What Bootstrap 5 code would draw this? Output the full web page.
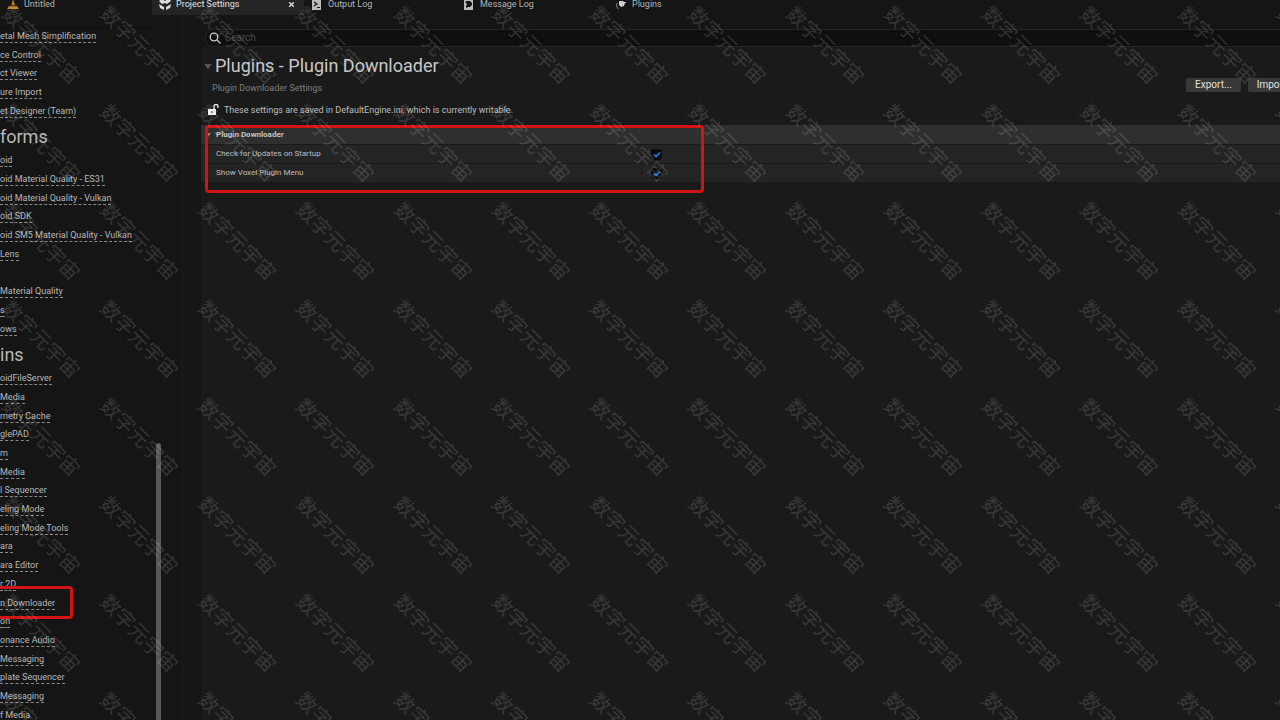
<!DOCTYPE html>
<html lang="en" data-bs-theme="dark">
<head>
<meta charset="utf-8">
<meta name="viewport" content="width=device-width, initial-scale=1">
<title>Project Settings</title>
<link href="https://cdn.jsdelivr.net/npm/bootstrap@5.3.0/dist/css/bootstrap.min.css" rel="stylesheet">
<style>
  body { font-family: Roboto, "Liberation Sans", sans-serif; font-size: 9px; line-height: 14px; color: #bdbdbd; background: #151515; }
  .tabs-bar { height: 15px; }
  .tab-btn { width: 152px; height: 22px; margin-top: -7px; padding: 0 9px 0 7px; gap: 5px; border: 0; background: transparent; color: #b4b4b4; font-size: 9px; }
  .tab-btn.active { background: #242424; color: #e4e4e4; }
  .tab-btn svg { width: 12px; height: 12px; flex: none; }
  .tab-btn .tab-close { width: 7px; height: 7px; }
  .side { width: 183px; border-right: 1px solid #1c1c1c; }
  .side-scroll { width: 152px; border-top: 1px solid #0d0d0d; margin-top: 12px; }
  .side-head { font-size: 18px; line-height: 30px; font-weight: 400; padding-top: 1px; height: 31px; color: #b8b8b8; }
  .side-list { display: grid; grid-auto-rows: 1fr; }
  .list-general { height: 93px; }
  .list-platforms { height: 187px; }
  .list-plugins { height: 355px; }
  .side-list a { color: #b8b8b8; text-decoration: none; line-height: 11px; border-bottom: 1px dashed #8a8a8a; white-space: nowrap; }
  .side-list li { display: flex; align-items: center; position: relative; }
  .thumb { left: 156px; top: 443px; bottom: 0; width: 5px; border-radius: 3px 3px 0 0; background: #575757; }
  .frame { border: 3px solid #d31414; border-radius: 4px; pointer-events: none; z-index: 2; }
  .frame-link { left: -4px; top: -8px; width: 77px; height: 33px; }
  .frame-rows { left: 4px; top: 0; width: 499px; height: 68px; }
  .main-col { background: #1a1a1a; margin-left: 18px; min-width: 0; }
  .search-row { background: #151515; height: 32px; padding-top: 14px; }
  .search-box { height: 18px; background: #0f0f0f; border: 1px solid #252525; border-right: 0; border-radius: 8px 0 0 8px; padding-left: 3px; margin-left: 4px; gap: 4px; }
  .search-box input { border: 0; background: transparent; color: #ccc; font-size: 10px; outline: 0; padding: 0; }
  .search-box input::placeholder { color: #4c4c4c; opacity: 1; }
  .page-title { font-size: 18px; line-height: 22px; font-weight: 400; color: #c8c8c8; }
  .muted { color: #7d7d7d; padding-left: 11px; }
  .ue-btn { background: #383838; color: #e0e0e0; border: 0; border-radius: 2px; font-size: 10px; line-height: 14px; width: 55px; padding: 0; }
  .io { margin-right: -23px; gap: 7px; margin-top: -3px; }
  .notice { padding: 8px 0 8px 6px; gap: 5px; }
  .cat { background: #2f2f2f; height: 19px; font-size: 8px; font-weight: 700; padding-left: 4px; gap: 4px; color: #c4c4c4; }
  .prop { background: #242424; border-top: 1px solid #1a1a1a; height: 19px; font-size: 8px; }
  .prop label { width: 441px; padding-left: 15px; border-right: 1px solid #1a1a1a; }
  .prop input { appearance: none; width: 11px; height: 11px; margin: 0 0 0 9px; border-radius: 2px; background: #0c0c0c; border: 0; }
  .prop input:checked { background-image: url("data:image/svg+xml,%3Csvg xmlns='http://www.w3.org/2000/svg' viewBox='0 0 11 11'%3E%3Cpath d='M3 5.5l2 2 4-4' fill='none' stroke='%231f7fe0' stroke-width='1.7'/%3E%3C/svg%3E"); }
  .wm { inset: 0; z-index: 3; pointer-events: none; overflow: hidden; display: grid; grid-template-columns: repeat(14, 98px); grid-auto-rows: 98px; margin: -5px 0 0 -8px; user-select: none; }
  .wm span { display: grid; place-items: center; white-space: nowrap; transform: rotate(45deg); font: 400 20px/20px "Noto Sans CJK SC", sans-serif; color: rgba(255, 255, 255, .15); }
</style>
</head>
<body class="vh-100 overflow-hidden position-relative d-flex flex-column">
<nav class="tabs-bar d-flex flex-shrink-0" aria-label="Open windows">
  <button class="tab-btn d-flex align-items-center" type="button"><svg viewBox="0 0 12 12"><path d="M0 11h12l-2-3H2zM4.500 7L6 1l2 6z" fill="#c08322"/><path d="M2 8h8" stroke="#6a4612"/></svg><span>Untitled</span></button>
  <button class="tab-btn active d-flex align-items-center" type="button"><svg viewBox="0 0 12 12" fill="#ddd"><path d="M0 3l3-2 3 2 4-3 2 3-4 3-2-1-3 1zM0 6l5 3v3L1 10zM12 6L7 9v3l4-2z"/></svg><span class="me-auto">Project Settings</span><svg class="tab-close" viewBox="0 0 12 12"><path d="M2 2l8 8M10 2L2 10" stroke="#ddd" stroke-width="2.400"/></svg></button>
  <button class="tab-btn d-flex align-items-center" type="button"><svg viewBox="0 0 12 12"><path d="M1 0h9v12H1z" fill="#bbb"/><path d="M3 4l3 2-3 2M6 9.500h3" stroke="#151515" stroke-width="1.200" fill="none"/></svg><span>Output Log</span></button>
  <button class="tab-btn d-flex align-items-center" type="button"><svg viewBox="0 0 12 12"><path d="M1 0h9v12H1z" fill="#bbb"/><path d="M2 4l2-1h3l2 2v2L7 9H5l-2 1V8l1-2z" fill="#151515"/></svg><span>Message Log</span></button>
  <button class="tab-btn d-flex align-items-center" type="button"><svg viewBox="0 0 12 12"><path d="M4 3h4l2 2-1 3-3 1-2-2zM8 4h3v1H8z" fill="#ccc"/><path d="M3 5L1 7l1 2 1 2" stroke="#888" fill="none"/></svg><span>Plugins</span></button>
</nav>
<div class="d-flex flex-grow-1" style="min-height:0">
  <aside class="side flex-shrink-0 overflow-hidden">
    <div class="side-scroll">
      <ul class="side-list list-general list-unstyled mb-0">
        <li><a href="#">etal Mesh Simplification</a></li><li><a href="#">ce Control</a></li><li><a href="#">ct Viewer</a></li><li><a href="#">ure Import</a></li><li><a href="#">et Designer (Team)</a></li>
      </ul>
      <h2 class="side-head mb-0">forms</h2>
      <ul class="side-list list-platforms list-unstyled mb-0">
        <li><a href="#">oid</a></li><li><a href="#">oid Material Quality - ES31</a></li><li><a href="#">oid Material Quality - Vulkan</a></li><li><a href="#">oid SDK</a></li><li><a href="#">oid SM5 Material Quality - Vulkan</a></li><li><a href="#">Lens</a></li><li></li><li><a href="#">Material Quality</a></li><li><a href="#">s</a></li><li><a href="#">ows</a></li>
      </ul>
      <h2 class="side-head mb-0">ins</h2>
      <ul class="side-list list-plugins list-unstyled mb-0">
        <li><a href="#">oidFileServer</a></li><li><a href="#">Media</a></li><li><a href="#">metry Cache</a></li><li><a href="#">glePAD</a></li><li><a href="#">m</a></li><li><a href="#">Media</a></li><li><a href="#">l Sequencer</a></li><li><a href="#">eling Mode</a></li><li><a href="#">eling Mode Tools</a></li><li><a href="#">ara</a></li><li><a href="#">ara Editor</a></li><li><a href="#">r 2D</a></li><li><a href="#">n Downloader</a><div class="frame frame-link position-absolute"></div></li><li><a href="#">on</a></li><li><a href="#">onance Audio</a></li><li><a href="#">Messaging</a></li><li><a href="#">plate Sequencer</a></li><li><a href="#">Messaging</a></li><li><a href="#">f Media</a></li>
      </ul>
    </div>
    <div class="thumb position-absolute"></div>
  </aside>
  <main class="main-col flex-grow-1">
    <div class="search-row">
      <div class="search-box d-flex align-items-center"><svg width="12" height="12" viewBox="0 0 12 12" fill="none" stroke="#ccc" stroke-width="1.300"><circle cx="5" cy="5" r="3.800"/><path d="M8 8l3.500 3.500"/></svg><input class="flex-grow-1" type="search" placeholder="Search" aria-label="Search"></div>
    </div>
    <div class="d-flex align-items-center ps-1 pt-2"><svg width="10" height="8" viewBox="0 0 10 8"><path d="M-1 2h8L3 7z" fill="#555"/></svg><h1 class="page-title mb-0">Plugins - Plugin Downloader</h1></div>
    <div class="d-flex justify-content-between align-items-center"><p class="muted mb-0 pt-1">Plugin Downloader Settings</p>
      <div class="io d-flex"><button class="ue-btn" type="button">Export...</button><button class="ue-btn" type="button">Import...</button></div></div>
    <div class="notice d-flex align-items-center"><svg width="12" height="12" viewBox="0 0 12 12"><path d="M1 5h8v6H1z" fill="#eee"/><path d="M7 5V2.500a2 2 0 0 1 4 0V4" stroke="#eee" stroke-width="1.300" fill="none"/><path d="M5 7v2" stroke="#222"/></svg><span>These settings are saved in DefaultEngine.ini, which is currently writable.</span></div>
    <section class="position-relative">
      <div class="cat d-flex align-items-center"><svg width="7" height="6" viewBox="0 0 7 6"><path d="M0 1h6L3 5z" fill="#888"/></svg><span>Plugin Downloader</span></div>
      <div class="prop d-flex align-items-center"><label for="upd">Check for Updates on Startup</label><input id="upd" type="checkbox" checked></div>
      <div class="prop d-flex align-items-center"><label for="vox">Show Voxel Plugin Menu</label><input id="vox" type="checkbox" checked></div>
      <div class="frame frame-rows position-absolute"></div>
    </section>
  </main>
</div>
<div class="wm position-absolute" id="wm" aria-hidden="true"></div>
<script>
  const wm = document.getElementById('wm');
  for (let i = 0; i < 14 * 8; i++) {
    const s = document.createElement('span');
    s.textContent = '数字元宇宙';
    wm.append(s);
  }
</script>
<script src="https://cdn.jsdelivr.net/npm/bootstrap@5.3.0/dist/js/bootstrap.bundle.min.js"></script>
</body>
</html>
